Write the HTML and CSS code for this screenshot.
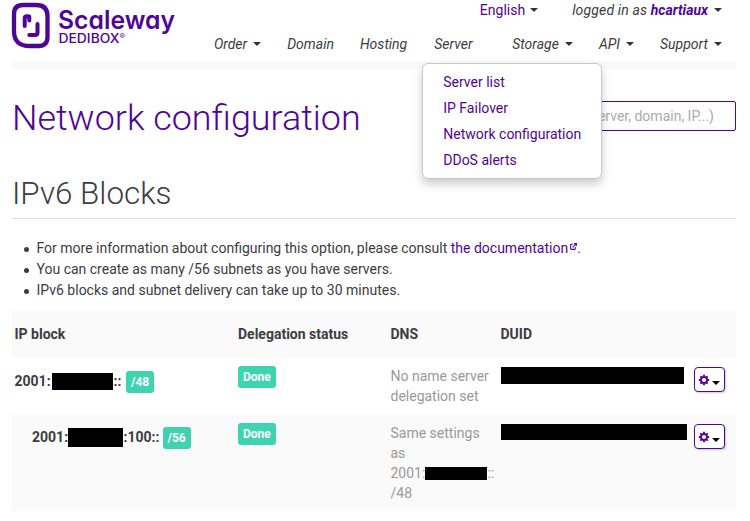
FILE: index.html
```html
<!DOCTYPE html>
<html lang="en">
<head>
<meta charset="utf-8">
<title>Network configuration</title>
<link rel="stylesheet" href="styles.css">
</head>
<body>
<svg class="defs" aria-hidden="true">
  <symbol id="gear" viewBox="0 0 12 12">
    <circle cx="6" cy="6" r="3" fill="none" stroke="currentColor" stroke-width="1.800"/>
    <path d="M6 .8v1.8M6 9.400V11.200M.8 6h1.800M9.400 6H11.200M2.300 2.300l1.300 1.300M8.400 8.400l1.300 1.300M9.700 2.300L8.400 3.600M3.600 8.400L2.300 9.700" stroke="currentColor" stroke-width="1.900"/>
  </symbol>
</svg>
<div class="page">
  <header class="header">
    <a class="logo">
      <svg width="180" height="52" viewBox="0 0 180 52">
        <path d="M11 3H24Q35.500 3 35.500 14V35Q35.500 44 26.500 44H18Q2 44 2 29V12Q2 3 11 3Z" fill="none" stroke="#4f0599" stroke-width="4.300"/>
        <path d="M12.700 24V16.500Q12.700 14.300 15 14.300H16.500Q17.300 14.300 17.300 15.500V18.500M25.500 22V30.500Q25.500 33 23 33H17.300" fill="none" stroke="#4f0599" stroke-width="4" stroke-linecap="round"/>
        <text class="logo-name" x="46" y="27" textLength="117" lengthAdjust="spacingAndGlyphs">Scaleway</text>
        <text class="logo-sub" x="46.500" y="40.500" textLength="61" lengthAdjust="spacingAndGlyphs">DEDIBOX</text>
        <text class="logo-reg" x="107.500" y="36.500">®</text>
      </svg>
    </a>
    <div class="menus">
      <div class="account">
        <a class="language">English<i class="caret"></i></a>
        <span class="user"><span class="as">logged in as </span><b>hcartiaux</b><i class="caret"></i></span>
      </div>
      <nav class="nav">
        <a>Order<i class="caret"></i></a>
        <a>Domain</a>
        <a>Hosting</a>
        <div class="open"><a>Server</a>
          <div class="dropdown">
            <a>Server list</a>
            <a>IP Failover</a>
            <a>Network configuration</a>
            <a>DDoS alerts</a>
          </div>
        </div>
        <a>Storage<i class="caret"></i></a>
        <a>API<i class="caret"></i></a>
        <a>Support<i class="caret"></i></a>
      </nav>
    </div>
  </header>
  <div class="band"></div>
  <div class="title-row">
    <h1>Network configuration</h1>
    <div class="search">(server, domain, IP...)</div>
  </div>
  <h2>IPv6 Blocks</h2>
  <ul class="notes">
    <li>For more information about configuring this option, please consult <a>the documentation<svg class="ext" width="7" height="7" viewBox="0 0 8 8"><path d="M3.500 1.500H1.500Q.7 1.500 .7 2.300V6.500Q.7 7.300 1.500 7.300H5.200Q6 7.300 6 6.500V4.500M3 5L7 1M4.700 .7H7.300V3.300" fill="none" stroke="currentColor" stroke-width="1.200"/></svg></a>.</li>
    <li>You can create as many /56 subnets as you have servers.</li>
    <li>IPv6 blocks and subnet delivery can take up to 30 minutes.</li>
  </ul>
  <div class="table">
    <div class="row head"><span>IP block</span><span>Delegation status</span><span>DNS</span><span>DUID</span></div>
    <div class="row first">
      <div class="block">2001:<i class="redact r1"></i>:: <span class="label">/48</span></div>
      <div><span class="label">Done</span></div>
      <div class="dns">No name server<br>delegation set</div>
      <div class="duid"><i class="redact r2"></i></div>
      <div><button class="tool"><svg width="12" height="12"><use href="#gear"/></svg><i class="caret"></i></button></div>
    </div>
    <div class="row second">
      <div class="block child">2001:<i class="redact r3"></i>:100:: <span class="label">/56</span></div>
      <div><span class="label">Done</span></div>
      <div class="dns">Same settings<br>as<br>2001:<i class="redact r4"></i>::<br>/48</div>
      <div class="duid"><i class="redact r5"></i></div>
      <div><button class="tool"><svg width="12" height="12"><use href="#gear"/></svg><i class="caret"></i></button></div>
    </div>
  </div>
</div>
</body>
</html>
```
FILE: styles.css
```css
* { box-sizing: border-box; }
body {
  margin: 0;
  background: #fff;
  color: #3c3c41;
  font: 14px/20px Roboto, "Liberation Sans", sans-serif;
  overflow: hidden;
}
.defs { display: none; }
.page { width: 724px; margin-left: 12px; }
.header { display: flex; justify-content: space-between; height: 61px; }
.logo { padding-top: 2px; }
.logo svg { display: block; overflow: visible; }
.logo text { font-family: Inter, Lato, sans-serif; fill: #4f0599; }
.logo .logo-name { font-size: 25.5px; font-weight: 600; font-feature-settings: "cv11", "ss03"; }
.logo .logo-sub { font-size: 12.5px; font-weight: 500; }
.logo .logo-reg { font-size: 8px; }
.menus { display: flex; flex-direction: column; }
.account { display: flex; justify-content: flex-end; gap: 33px; height: 34px; padding-right: 14px; }
.language, .user b { color: #4f0599; }
.language .caret { margin-left: 5px; margin-right: 1px; }
.user, .nav { font-style: italic; }
.as { letter-spacing: .15px; }
.caret {
  display: inline-block;
  margin-left: 6px;
  vertical-align: 3px;
  border: 4px solid transparent;
  border-top-color: #333;
  border-bottom: 0;
}
.nav { display: flex; gap: 26px; padding-right: 14px; white-space: nowrap; }
.open { position: relative; width: 52px; margin-left: 1px; }
.dropdown {
  position: absolute;
  z-index: 2;
  top: 29px;
  left: -12px;
  width: 180px;
  height: 116px;
  padding: 5px 20px;
  border: 1px solid #c8c8c8;
  border-radius: 6px;
  background: #fff;
  box-shadow: 0 5px 10px rgba(0, 0, 0, .2);
  color: #4f0599;
  font-style: normal;
}
.dropdown a { display: block; line-height: 26px; height: 26px; }
.band { height: 8px; background: #f9f9f9; }
.title-row { display: flex; justify-content: space-between; height: 97px; padding-top: 28px; }
h1, h2 { margin: 0; font-weight: 300; }
h1 { padding-top: 1px; color: #4f0599; font-size: 35.9px; line-height: 40px; }
.search {
  width: 180px;
  height: 30px;
  margin-top: 4px;
  padding-right: 21px;
  border: 1px solid #4f0599;
  border-radius: 2px;
  color: #aaa;
  line-height: 28px;
  text-align: right;
}
h2 { height: 53px; padding-top: 8px; border-bottom: 1px solid #ddd; font-size: 31.4px; line-height: 40px; color: #3c3c41; }
.notes { margin: 19px 0 9px; padding-left: 24.5px; line-height: 21px; list-style: none; }
.notes li { display: flex; align-items: center; white-space: pre; }
.notes li::before { content: ""; width: 5px; height: 5px; margin: 1px 7.5px 0 -12.5px; border-radius: 50%; background: #3c3c41; }
.notes a { color: #4f0599; }
.ext { margin-left: 2px; vertical-align: 3px; }
.row { display: grid; grid-template-columns: 223.5px 152.5px 110px 193px 40px; padding-left: 2.5px; }
.head { height: 48px; line-height: 48px; font-weight: 700; background: #fafafa; }
.first { height: 56px; padding-top: 8px; }
.second { height: 97px; padding-top: 9px; background: #fafafa; }
.block { padding-top: 4px; font-weight: 700; white-space: nowrap; }
.first .block { padding-top: 5px; }
.block .label { margin-left: 1px; }
.child { padding-left: 17.5px; }
.child .label { margin-left: -.5px; }
.label {
  display: inline-block;
  height: 22px;
  padding: 0 5px;
  border-radius: 3px;
  background: #3fd3b0;
  color: #fff;
  font-size: 12px;
  font-weight: 700;
  line-height: 22px;
}
.dns { color: #999; white-space: nowrap; }
.redact { display: inline-block; background: #000; }
.r1 { width: 61px; height: 17px; margin: 0 1px; vertical-align: -4px; }
.r2 { display: block; width: 183px; height: 17px; margin: 1px 0 0; }
.r3 { width: 55px; height: 19px; margin: 0 .5px 0 0; vertical-align: -5px; }
.r4 { width: 62px; height: 13px; vertical-align: -2px; }
.r5 { display: block; width: 186px; height: 16px; margin-top: 1px; }
.tool {
  display: flex;
  align-items: center;
  width: 31px;
  height: 25px;
  margin: 1px 0 0;
  padding: 0 4px 0 3px;
  border: 1px solid #4f0599;
  border-radius: 4px;
  background: #fff;
  box-shadow: 1px 1px 2px rgba(0, 0, 0, .2);
  color: #4f0599;
}
.tool svg { flex: none; }
.tool .caret { margin: 6px 0 0 2px; border-top-color: #000; }
```
